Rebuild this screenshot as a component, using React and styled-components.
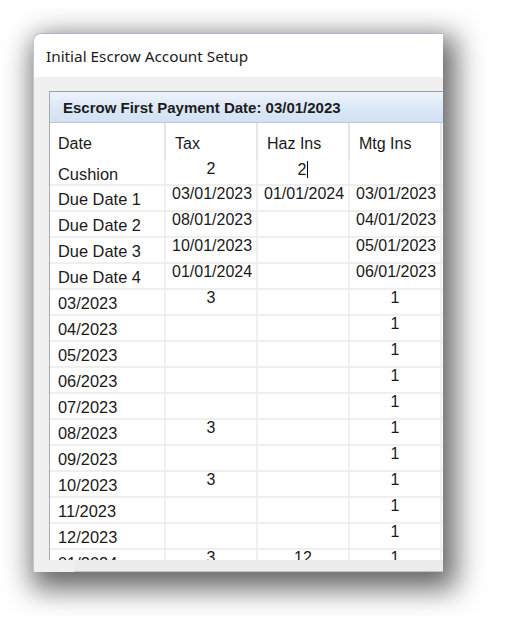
import React from 'react';
import styled, { createGlobalStyle } from 'styled-components';

const GlobalStyle = createGlobalStyle`
  html, body {
    margin: 0;
    padding: 0;
    background: #ffffff;
  }
  body {
    font-family: 'Liberation Sans', Arial, sans-serif;
    color: #1a1a1a;
  }
`;

const columns = ['Tax', 'Haz Ins', 'Mtg Ins'];

const dueRows = [
  { label: 'Due Date 1', values: ['03/01/2023', '01/01/2024', '03/01/2023'] },
  { label: 'Due Date 2', values: ['08/01/2023', '', '04/01/2023'] },
  { label: 'Due Date 3', values: ['10/01/2023', '', '05/01/2023'] },
  { label: 'Due Date 4', values: ['01/01/2024', '', '06/01/2023'] },
];

const monthRows = [
  { label: '03/2023', values: ['3', '', '1'] },
  { label: '04/2023', values: ['', '', '1'] },
  { label: '05/2023', values: ['', '', '1'] },
  { label: '06/2023', values: ['', '', '1'] },
  { label: '07/2023', values: ['', '', '1'] },
  { label: '08/2023', values: ['3', '', '1'] },
  { label: '09/2023', values: ['', '', '1'] },
  { label: '10/2023', values: ['3', '', '1'] },
  { label: '11/2023', values: ['', '', '1'] },
  { label: '12/2023', values: ['', '', '1'] },
  { label: '01/2024', values: ['3', '12', '1'] },
];

const App = () => {
  return (
    <>
      <GlobalStyle />
      <Page>
        <Window>
          <TitleBar>Initial Escrow Account Setup</TitleBar>
          <Body>
            <Panel>
              <PanelHeader>Escrow First Payment Date: 03/01/2023</PanelHeader>
              <Grid>
                <HeaderRow>
                  <HeaderCell first>Date</HeaderCell>
                  {columns.map((c) => (
                    <HeaderCell key={c}>{c}</HeaderCell>
                  ))}
                  <HeaderCell />
                </HeaderRow>
                <CushionRow>
                  <LabelCell>Cushion</LabelCell>
                  <ValueCell center>2</ValueCell>
                  <ValueCell center>2<Caret /></ValueCell>
                  <ValueCell center />
                  <ValueCell />
                </CushionRow>
                {dueRows.map((row) => (
                  <DataRow key={row.label}>
                    <LabelCell>{row.label}</LabelCell>
                    {row.values.map((v, i) => (
                      <ValueCell key={i}>{v}</ValueCell>
                    ))}
                    <ValueCell />
                  </DataRow>
                ))}
                {monthRows.map((row) => (
                  <DataRow key={row.label}>
                    <LabelCell>{row.label}</LabelCell>
                    {row.values.map((v, i) => (
                      <ValueCell key={i} center>{v}</ValueCell>
                    ))}
                    <ValueCell />
                  </DataRow>
                ))}
              </Grid>
              <ScrollStrip>
                <ScrollTrack />
              </ScrollStrip>
            </Panel>
          </Body>
        </Window>
      </Page>
    </>
  );
};

export default App;

const Page = styled.div`
  width: 508px;
  height: 638px;
  padding: 33px 0 0 33px;
  box-sizing: border-box;
  overflow: hidden;
`;

const Window = styled.div`
  width: 410px;
  height: 539px;
  display: flex;
  flex-direction: column;
  box-sizing: border-box;
  border-top: 1px solid #a9b8cc;
  border-left: 1px solid #bfc6cf;
  border-top-left-radius: 8px;
  overflow: hidden;
  background: #f0f0f0;
  box-shadow: 6px 10px 28px 7px rgba(0, 0, 0, 0.6);
`;

const TitleBar = styled.div`
  height: 43px;
  flex: none;
  display: flex;
  align-items: center;
  padding-left: 12px;
  background: #ffffff;
  font-family: 'Noto Sans', 'Open Sans', sans-serif;
  font-size: 15.3px;
  color: #1e1a1c;
`;

const Body = styled.div`
  flex: 1;
  display: flex;
  padding: 14px 0 0 15px;
  min-height: 0;
  background: #f0f0f0;
`;

const Panel = styled.div`
  flex: 1;
  display: flex;
  flex-direction: column;
  border-top: 1px solid #9c9c9c;
  border-left: 1px solid #a8a8a8;
  background: #ffffff;
  min-height: 0;
`;

const PanelHeader = styled.div`
  height: 30px;
  flex: none;
  display: flex;
  align-items: center;
  padding-left: 13px;
  border-bottom: 1px solid #b9c9dd;
  background: linear-gradient(to bottom, #edf3fc 0%, #dbe7f6 55%, #d3e1f3 100%);
  font-weight: bold;
  font-size: 15px;
  color: #1c1c1c;
`;

const Grid = styled.div`
  flex: 1;
  min-height: 0;
  overflow: hidden;
  display: flex;
  flex-direction: column;
`;

const RowBase = styled.div`
  display: grid;
  grid-template-columns: 116px 92px 92px 92px 1fr;
  flex: none;
  font-size: 16px;
  line-height: 16px;
`;

const HeaderRow = styled(RowBase)`
  height: 37px;
`;

const CushionRow = styled(RowBase)`
  height: 24px;
  border-bottom: 2px solid #efefef;
`;

const DataRow = styled(RowBase)`
  height: 24px;
  border-bottom: 2px solid #efefef;
`;

const HeaderCell = styled.div`
  padding: 13px 0 0 ${(props) => (props.first ? '8px' : '9px')};
  border-right: 2px solid #e6e6e6;
  white-space: nowrap;
`;

const LabelCell = styled.div`
  padding: 6px 0 0 8px;
  border-right: 2px solid #efefef;
  white-space: nowrap;
  font-size: 16.4px;
  ${DataRow} & {
    padding-top: 5px;
  }
`;

const ValueCell = styled.div`
  padding-top: 1px;
  text-align: ${(props) => (props.center ? 'center' : 'left')};
  padding-left: ${(props) => (props.center ? '0' : '6px')};
  border-right: 2px solid #efefef;
  white-space: nowrap;
  ${DataRow} & {
    padding-top: 0;
  }
`;

const Caret = styled.span`
  display: inline-block;
  width: 1px;
  height: 17px;
  margin-left: 1px;
  vertical-align: -3px;
  background: #000000;
`;

const ScrollStrip = styled.div`
  height: 12px;
  flex: none;
  display: flex;
  margin-left: -16px;
  background: #f0f0f0;
`;

const ScrollTrack = styled.div`
  flex: 1;
  margin-left: 40px;
  border-bottom: 1px solid #c4c4c4;
  background: #ebebeb;
`;
